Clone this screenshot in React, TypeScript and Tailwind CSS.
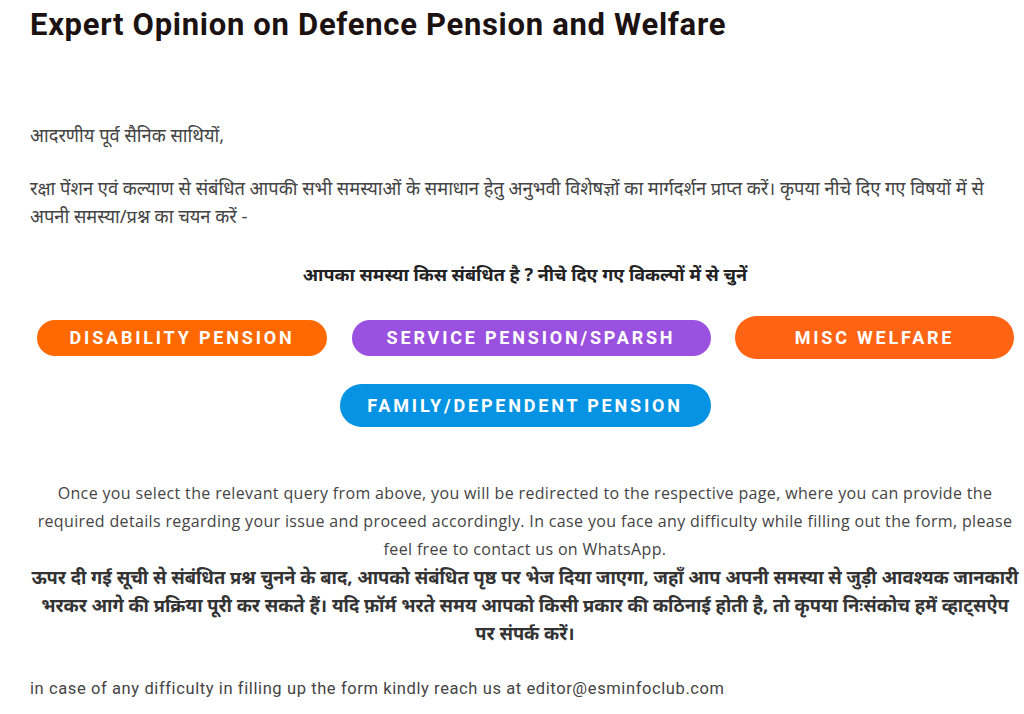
import React from "react";

const buttons = [
  { label: "DISABILITY PENSION", cls: "bg-[#ff6900] w-[290px] h-[36px]" },
  { label: "SERVICE PENSION/SPARSH", cls: "bg-[#9b51e0] w-[359px] h-[36px]" },
  { label: "MISC WELFARE", cls: "bg-[#ff6314] w-[279px] h-[43px]" },
];

const PillButton = ({ label, cls }: { label: string; cls: string }) => (
  <button
    className={`${cls} rounded-full text-white text-[18px] font-bold tracking-[2.8px] flex items-center justify-center font-['Roboto','Liberation_Sans',sans-serif]`}
  >
    {label}
  </button>
);

export default function App() {
  return (
    <div className="w-[1024px] h-[714px] overflow-hidden bg-white font-['Noto_Sans','Noto_Sans_Devanagari',sans-serif]">
      <div className="pl-[30px] pr-[4px] pt-[6px]">
        <h1 className="text-[31px] font-bold leading-[38px] tracking-[0.7px] text-[#1c1212] font-['Roboto','Liberation_Sans',sans-serif]">
          Expert Opinion on Defence Pension and Welfare
        </h1>

        <div className="mt-[77px] text-[18.3px] leading-[28px] text-[#444]">
          <p>आदरणीय पूर्व सैनिक साथियों,</p>
          <p className="mt-[25px]">
            रक्षा पेंशन एवं कल्याण से संबंधित आपकी सभी समस्याओं के समाधान हेतु अनुभवी विशेषज्ञों का मार्गदर्शन प्राप्त करें। कृपया नीचे दिए गए विषयों में से
            <br />
            अपनी समस्या/प्रश्न का चयन करें -
          </p>
        </div>

        <p className="mt-[30px] text-center text-[18px] font-bold leading-[28px] text-[#222]">
          आपका समस्या किस संबंधित है ? नीचे दिए गए विकल्पों में से चुनें
        </p>

        <div className="mt-[28px] flex items-center justify-between pl-[7px] pr-[6px]">
          {buttons.map((b) => (
            <PillButton key={b.label} label={b.label} cls={b.cls} />
          ))}
        </div>

        <div className="mt-[25px] flex justify-center">
          <PillButton label="FAMILY/DEPENDENT PENSION" cls="bg-[#0693e3] w-[371px] h-[43px]" />
        </div>

        <div className="mt-[52px] text-center">
          <p className="text-[16px] leading-[28px] tracking-[0.35px] text-[#444] font-['Open_Sans','Lato',sans-serif]">
            Once you select the relevant query from above, you will be redirected to the respective page, where you can provide the required details regarding your issue and proceed accordingly. In case you face any difficulty while filling out the form, please feel free to contact us on WhatsApp.
          </p>
          <p className="text-[18.3px] font-bold leading-[28px] text-[#333]">
            ऊपर दी गई सूची से संबंधित प्रश्न चुनने के बाद, आपको संबंधित पृष्ठ पर भेज दिया जाएगा, जहाँ आप अपनी समस्या से जुड़ी आवश्यक जानकारी भरकर आगे की प्रक्रिया पूरी कर सकते हैं। यदि फ़ॉर्म भरते समय आपको किसी प्रकार की कठिनाई होती है, तो कृपया निःसंकोच हमें व्हाट्सऐप पर संपर्क करें।
          </p>
        </div>

        <p className="mt-[28px] text-[16.5px] leading-[28px] tracking-[0.6px] text-[#444] font-['Roboto','Liberation_Sans',sans-serif]">
          in case of any difficulty in filling up the form kindly reach us at editor@esminfoclub.com
        </p>
      </div>
    </div>
  );
}
